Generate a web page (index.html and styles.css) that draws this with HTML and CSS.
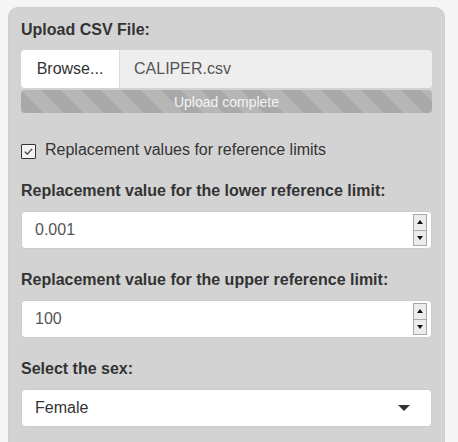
FILE: index.html
```html
<!DOCTYPE html>
<html>
<head>
<meta charset="utf-8">
<link rel="stylesheet" href="styles.css">
</head>
<body>
<div class="well">
  <div class="group">
    <label class="ctl-label">Upload CSV File:</label>
    <div class="file-row">
      <span class="browse">Browse...</span>
      <span class="fname">CALIPER.csv</span>
    </div>
    <div class="progress"><span>Upload complete</span></div>
  </div>
  <div class="check-row">
    <span class="cbox"><svg width="14" height="14" viewBox="0 0 14 14"><path d="M3 7.2 L5.6 9.8 L11 4.2" fill="none" stroke="#333" stroke-width="1.3"/></svg></span>
    <span class="check-text">Replacement values for reference limits</span>
  </div>
  <div class="group">
    <label class="ctl-label">Replacement value for the lower reference limit:</label>
    <div class="input num">
      <span class="val">0.001</span>
      <span class="spin"><span class="sb"><i class="up"></i></span><span class="sb"><i class="down"></i></span></span>
    </div>
  </div>
  <div class="group">
    <label class="ctl-label">Replacement value for the upper reference limit:</label>
    <div class="input num">
      <span class="val">100</span>
      <span class="spin"><span class="sb"><i class="up"></i></span><span class="sb"><i class="down"></i></span></span>
    </div>
  </div>
  <div class="group">
    <label class="ctl-label">Select the sex:</label>
    <div class="input select">
      <span class="sel-val">Female</span>
      <i class="caret"></i>
    </div>
  </div>
</div>
</body>
</html>
```
FILE: styles.css
```css
html, body { margin: 0; padding: 0; }
body {
  background: #f5f5f5;
  font-family: "Liberation Sans", Arial, sans-serif;
  font-size: 16px;
  color: #333;
  padding: 7px 13px 0 8px;
  height: 442px;
  overflow: hidden;
  box-sizing: border-box;
}
.well {
  background: #d3d3d3;
  border: 1px solid #cfcfcf;
  border-radius: 10px;
  padding: 11px 12px 20px 12px;
  height: 460px;
}
.group { margin-bottom: 20px; }
.ctl-label {
  display: block;
  font-weight: bold;
  font-size: 16px;
  line-height: 22px;
  margin-bottom: 9px;
}
.file-row {
  display: flex;
  height: 38px;
  border-radius: 4px;
  overflow: hidden;
}
.browse {
  background: #fff;
  width: 98px;
  display: flex;
  align-items: center;
  justify-content: center;
  font-size: 16px;
  color: #333;
  border-right: 1px solid #ddd;
}
.fname {
  flex: 1;
  background: #eee;
  display: flex;
  align-items: center;
  padding-left: 14px;
  font-size: 16px;
  color: #555;
}
.progress {
  margin-top: 2px;
  height: 23px;
  border-radius: 4px;
  background-color: #a9a9a9;
  background-image: linear-gradient(45deg, rgba(255,255,255,.15) 25%, transparent 25%, transparent 50%, rgba(255,255,255,.15) 50%, rgba(255,255,255,.15) 75%, transparent 75%, transparent);
  background-size: 40px 40px;
  display: flex;
  align-items: center;
  justify-content: center;
  color: #fff;
  font-size: 14px;
}
.progress span { color: #f4f4f4; }
.check-row {
  display: flex;
  align-items: center;
  margin: 27px 0 20px 0;
  height: 20px;
}
.cbox {
  width: 13px;
  height: 13px;
  border: 1px solid #333;
  background: #f2f2f2;
  border-radius: 1px;
  display: flex;
  margin-right: 9px;
  margin-top: 2px;
}
.cbox svg { width: 13px; height: 13px; }
.check-text { font-size: 16px; color: #333; }
.input {
  background: #fff;
  height: 38px;
  border-radius: 4px;
  border: 1px solid #ccc;
  box-sizing: border-box;
  display: flex;
  align-items: center;
  padding-left: 13px;
  font-size: 16px;
  color: #555;
}
.input .val { flex: 1; }
.spin {
  display: flex;
  flex-direction: column;
  width: 14px;
  height: 32px;
  margin-right: 4px;
}
.sb {
  flex: 1;
  border: 1px solid #a8a8a8;
  background: #ececec;
  display: flex;
  align-items: center;
  justify-content: center;
}
.sb + .sb { border-top: none; }
.up {
  width: 0; height: 0;
  border-left: 3.5px solid transparent;
  border-right: 3.5px solid transparent;
  border-bottom: 4px solid #111;
}
.down {
  width: 0; height: 0;
  border-left: 3.5px solid transparent;
  border-right: 3.5px solid transparent;
  border-top: 4px solid #111;
}
.select { padding-right: 21px; color: #333; }
.sel-val { flex: 1; font-size: 16px; }
.caret {
  width: 0; height: 0;
  border-left: 6px solid transparent;
  border-right: 6px solid transparent;
  border-top: 6px solid #333;
}
```
